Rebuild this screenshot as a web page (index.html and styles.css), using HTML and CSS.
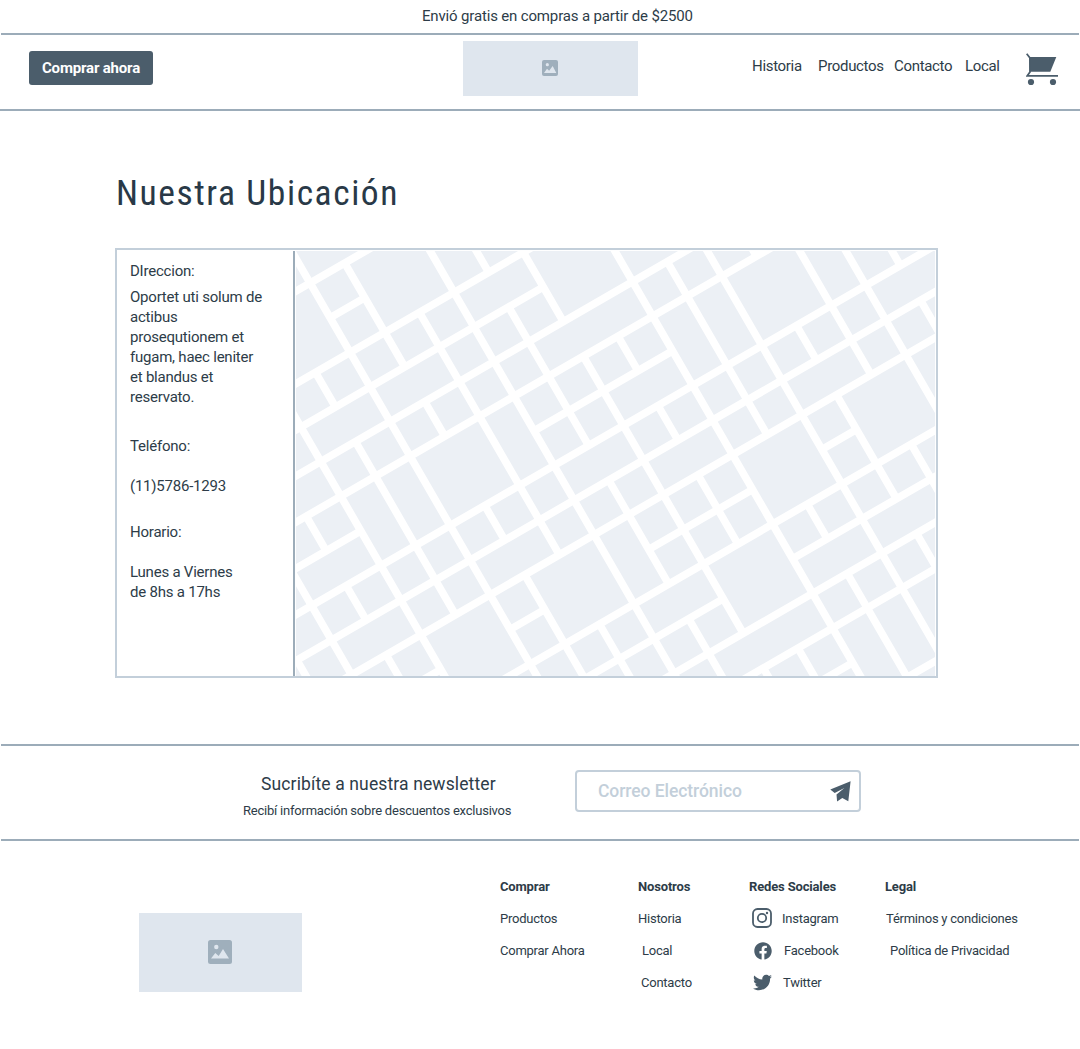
FILE: index.html
```
<!DOCTYPE html>
<html lang="es">
<head>
<meta charset="utf-8">
<title>Nuestra Ubicación</title>
<link rel="stylesheet" href="styles.css">
</head>
<body>
<p class="banner">Envió gratis en compras a partir de $2500</p>
<header class="header">
  <a class="buy-button">Comprar ahora</a>
  <div class="logo logo-header">
    <svg width="16" height="16" viewBox="0 0 24 24"><rect class="pic-frame" width="24" height="24" rx="3"/><circle class="pic-shape" cx="8" cy="7" r="2.4"/><path class="pic-shape" d="M3 19.5 7.5 13l3.2 3L16 9l5.5 10.5z"/></svg>
  </div>
  <nav class="nav">
    <a>Historia</a><a>Productos</a><a>Contacto</a><a>Local</a>
    <svg class="cart" width="33" height="33" viewBox="0 0 33 33"><path class="ink" d="M3 4h27.3l-6 14.7H3.7z"/><path class="ink-line" d="M.7.7 4 5v14L1.3 22.8H32"/><circle class="ink" cx="5" cy="29" r="3.1"/><circle class="ink" cx="27" cy="29" r="3.1"/></svg>
  </nav>
</header>

<main class="main">
  <h1>Nuestra Ubicación</h1>
  <section class="card">
    <div class="info">
      <p>DIreccion:</p>
      <p class="address">Oportet uti solum de actibus prosequtionem et fugam, haec leniter et blandus et reservato.</p>
      <p class="phone-label">Teléfono:</p>
      <p class="value">(11)5786-1293</p>
      <p class="hours-label">Horario:</p>
      <p class="value">Lunes a Viernes<br>de 8hs a 17hs</p>
    </div>
    <svg class="map" width="639" height="425" viewBox="0 0 1917 1275">
      <g class="roads" transform="translate(42.3 96.2) rotate(-30) scale(120)">
        <path d="M-2 0H3M0 1H1M-3 2H9M-3 3H5M-4 4H13M-5 5H13M-5 6H-2M3 6H7M-5 7H15M-6 8H15M-6 9H15M-3 10H-2M0 10H1M4 10H7M9 10H10M-2 11H15M0 12H5M7 12H14M2 13H15M3 14H15M6 15H7M6 16H11"/>
        <path d="M-5 8V11M-4 5V12M-3 5V6M-3 7V8M-3 9V12M-2 2V12M-1 2V3M-1 4V9M0-2V13M1 0V3M1 4V5M1 7V8M1 9V14M2 2V9M2 11V14M3-1V15M4 0V2M4 3V7M4 8V11M4 12V15M5 2V4M5 5V13M5 14V16M6 5V6M6 7V8M6 9V11M6 14V16M7 2V17M8 4V9M8 11V12M8 13V17M9 3V17M10 4V5M10 7V8M10 9V12M10 13V14M11 5V9M11 11V13M12 5V14M13 6V7M13 8V10"/>
      </g>
    </svg>
  </section>
</main>

<section class="newsletter">
  <div class="newsletter-text">
    <h2>Sucribíte a nuestra newsletter</h2>
    <p>Recibí información sobre descuentos exclusivos</p>
  </div>
  <div class="email">
    <span>Correo Electrónico</span>
    <svg width="21" height="21" viewBox="0 0 21 21"><path class="ink" d="M.3 8.6 20.6.2 18.3 20.3l-6-3.2-5.2 3.4-.6-7.1L14.4 7 4.7 12z"/></svg>
  </div>
</section>

<footer class="footer">
  <div class="logo logo-footer">
    <svg width="24" height="24" viewBox="0 0 24 24"><rect class="pic-frame" width="24" height="24" rx="2.5"/><circle class="pic-shape" cx="8.3" cy="7" r="2.2"/><path class="pic-shape" d="M3 18.5 7.3 13l3.4 3L15 9l6 9.5z"/></svg>
  </div>
  <div class="column">
    <h3>Comprar</h3>
    <a>Productos</a>
    <a>Comprar Ahora</a>
  </div>
  <div class="column">
    <h3>Nosotros</h3>
    <a>Historia</a>
    <a class="indent-4">Local</a>
    <a class="indent-3">Contacto</a>
  </div>
  <div class="column">
    <h3>Redes Sociales</h3>
    <a class="social instagram"><svg width="20" height="20" viewBox="0 0 20 20"><rect class="ink-line" x="1" y="1" width="18" height="18" rx="4.5"/><circle class="ink-line" cx="10" cy="10" r="4.2"/><circle class="ink" cx="15" cy="5" r="1.2"/></svg>Instagram</a>
    <a class="social facebook"><svg width="18" height="18" viewBox="0 0 512 512"><path class="ink" d="M504 256C504 119 393 8 256 8S8 119 8 256c0 123.78 90.69 226.38 209.25 245V327.69h-63V256h63v-54.64c0-62.15 37-96.48 93.67-96.48 27.14 0 55.52 4.84 55.52 4.84v61h-31.28c-30.8 0-40.41 19.12-40.41 38.73V256h68.78l-11 71.69h-57.78V501C413.31 479.38 504 379.78 504 256z"/></svg>Facebook</a>
    <a class="social twitter"><svg width="19" height="19" viewBox="0 0 512 512"><path class="ink" d="M459.37 151.716c.325 4.548.325 9.097.325 13.645 0 138.72-105.583 298.558-298.558 298.558-59.452 0-114.68-17.219-161.137-47.106 8.447.974 16.568 1.299 25.34 1.299 49.055 0 94.213-16.568 130.274-44.832-46.132-.975-84.792-31.188-98.112-72.772 6.498.974 12.995 1.624 19.818 1.624 9.421 0 18.843-1.3 27.614-3.573-48.081-9.747-84.143-51.98-84.143-102.985v-1.299c13.969 7.797 30.214 12.67 47.431 13.319-28.264-18.843-46.781-51.005-46.781-87.391 0-19.492 5.197-37.36 14.294-52.954 51.655 63.675 129.3 105.258 216.365 109.807-1.624-7.797-2.599-15.918-2.599-24.04 0-57.828 46.782-104.934 104.934-104.934 30.213 0 57.502 12.67 76.67 33.137 23.715-4.548 46.456-13.32 66.599-25.34-7.798 24.366-24.366 44.833-46.132 57.827 21.117-2.273 41.584-8.122 60.426-16.243-14.292 20.791-32.161 39.308-52.628 54.253z"/></svg>Twitter</a>
  </div>
  <div class="column">
    <h3>Legal</h3>
    <a class="indent-1">Términos y condiciones</a>
    <a class="indent-5">Política de Privacidad</a>
  </div>
</footer>
</body>
</html>
```
FILE: styles.css
```
* { box-sizing: border-box; margin: 0; padding: 0; }

body {
  background: #fff;
  color: #2d3c48;
  font: 15px/20px Roboto, "Liberation Sans", sans-serif;
  letter-spacing: -.16px;
}

svg { display: block; flex: none; }
.ink { fill: #4b5d6b; }
.ink-line { fill: none; stroke: #4b5d6b; stroke-width: 1.8; }

.banner {
  height: 35px;
  margin: 0 1px;
  padding: 6px 0 0 421px;
  border-bottom: 2px solid #9cacb9;
}

.header {
  display: grid;
  grid-template-columns: 434px 289px 1fr;
  align-items: start;
  height: 76px;
  padding: 6px 0 0 29px;
  border-bottom: 2px solid #9cacb9;
}

.buy-button {
  width: 124px;
  height: 34px;
  margin-top: 10px;
  border-radius: 3px;
  background: #4b5d6b;
  color: #fff;
  font-weight: 700;
  line-height: 34px;
  letter-spacing: -.18px;
  text-align: center;
}

.logo { display: flex; align-items: center; justify-content: center; background: #dfe6ee; }
.logo-header { width: 175px; height: 55px; padding: 0 2px 2px 0; }
.logo-footer { width: 163px; height: 79px; margin-top: 36px; padding: 0 1px 2px 0; }
.pic-frame { fill: #9fafbc; }
.pic-shape { fill: #dfe6ee; }

.nav {
  display: grid;
  grid-template-columns: 66px 76px 71px 61px auto;
  padding-top: 15px;
  letter-spacing: -.32px;
}
.cart { margin-top: -3px; }

.main { padding: 60px 0 66px 115px; }

h1 {
  padding-left: 1px;
  color: #293947;
  font-family: "Roboto Condensed", Roboto, sans-serif;
  font-size: 35.5px;
  font-weight: 400;
  line-height: 44px;
  letter-spacing: 1.57px;
}

.card {
  display: flex;
  width: 823px;
  height: 430px;
  margin-top: 33px;
  padding: 1px 1px 0 0;
  border: 2px solid #c3cfda;
}
.info {
  width: 178px;
  padding: 10px 24px 0 13px;
  border-right: 2px solid #9cacb9;
  letter-spacing: -.22px;
}
.address { margin-top: 6px; }
.phone-label { margin-top: 29px; }
.hours-label { margin-top: 26px; }
.value { margin-top: 20px; white-space: nowrap; }

.map { margin-left: 1px; background: #ecf0f5; }
.roads { fill: none; stroke: #fff; stroke-width: .19; }

.newsletter {
  display: flex;
  height: 97px;
  margin: 0 1px;
  padding: 24px 0 0 241px;
  border: solid #9cacb9;
  border-width: 2px 0;
}
.newsletter-text { width: 333px; }
h2 {
  margin: 4px 0 0 19px;
  font-size: 17.5px;
  font-weight: 400;
  line-height: 20px;
  letter-spacing: .13px;
}
.newsletter-text p { margin: 7px 0 0 1px; font-size: 13px; letter-spacing: -.22px; }

.email {
  display: flex;
  align-items: center;
  justify-content: space-between;
  width: 286px;
  height: 42px;
  padding: 0 8px 0 21px;
  border: 2px solid #c3cfda;
  border-radius: 4px;
  color: #c3cfda;
  font-size: 17.5px;
  font-weight: 500;
  letter-spacing: -.07px;
}

.footer {
  display: grid;
  grid-template-columns: 361px 138px 111px 136px 1fr;
  padding: 36px 0 0 139px;
  font-size: 13px;
  letter-spacing: -.24px;
}
.column { display: flex; flex-direction: column; gap: 12px; white-space: nowrap; }
h3 { font-size: 13px; font-weight: 700; line-height: 20px; letter-spacing: -.16px; }
.indent-1 { padding-left: 1px; }
.indent-3 { padding-left: 3px; }
.indent-4 { padding-left: 4px; }
.indent-5 { padding-left: 5px; }

.social { display: flex; align-items: center; height: 20px; }
.instagram { gap: 10px; padding-left: 3px; }
.facebook { gap: 12px; padding-left: 5px; }
.twitter { gap: 11px; padding-left: 4px; }
.instagram svg, .twitter svg { margin-top: -2px; }
```
